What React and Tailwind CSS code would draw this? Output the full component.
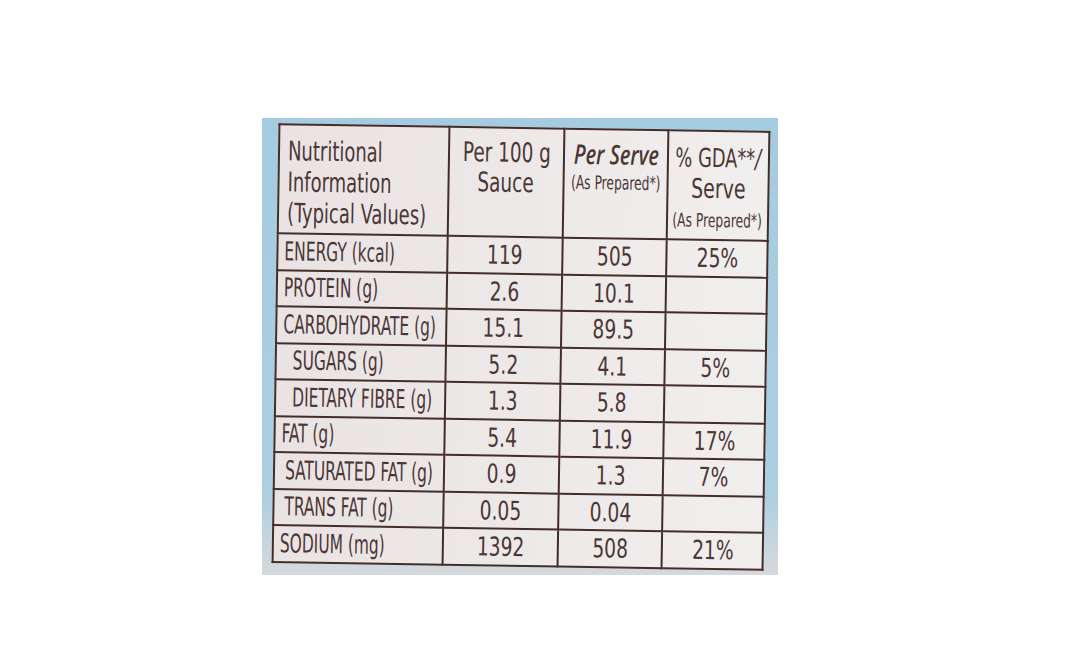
import React from "react";

const narrow = "font-['Liberation_Sans_Narrow','DejaVu_Sans_Condensed','Liberation_Sans',sans-serif]";

const rows = [
  { label: "ENERGY (kcal)", per100: "119", serve: "505", gda: "25%", indent: "pl-[6px]" },
  { label: "PROTEIN (g)", per100: "2.6", serve: "10.1", gda: "", indent: "pl-[6px]" },
  { label: "CARBOHYDRATE (g)", per100: "15.1", serve: "89.5", gda: "", indent: "pl-[6px]" },
  { label: "SUGARS (g)", per100: "5.2", serve: "4.1", gda: "5%", indent: "pl-[16px]" },
  { label: "DIETARY FIBRE (g)", per100: "1.3", serve: "5.8", gda: "", indent: "pl-[16px]" },
  { label: "FAT (g)", per100: "5.4", serve: "11.9", gda: "17%", indent: "pl-[6px]" },
  { label: "SATURATED FAT (g)", per100: "0.9", serve: "1.3", gda: "7%", indent: "pl-[10px]" },
  { label: "TRANS FAT (g)", per100: "0.05", serve: "0.04", gda: "", indent: "pl-[10px]" },
  { label: "SODIUM (mg)", per100: "1392", serve: "508", gda: "21%", indent: "pl-[6px]" },
];

const line = "border-[2px] border-[#432d29]";
const squeeze = "inline-block scale-x-[0.8] whitespace-nowrap";
const head = "flex justify-center";

const App = () => {
  return (
    <div className="min-h-[671px] w-[1068px] bg-white pl-[262px] pt-[118px]">
      <div className="h-[457px] w-[516px] overflow-hidden bg-[linear-gradient(to_bottom,#a4cbe0_0%,#accfe2_82%,#d6d9dd_100%)] pl-[13px] pt-[9px]">
        <table
          className={`${narrow} w-[490px] table-fixed rotate-[0.9deg] border-collapse bg-[linear-gradient(to_right,#e9e3e4,#efeaea_60%,#f1eeee)] text-[#4b3634]`}
        >
          <colgroup>
            <col className="w-[170px]" />
            <col className="w-[115px]" />
            <col className="w-[104px]" />
            <col className="w-[101px]" />
          </colgroup>
          <thead>
            <tr className="h-[109px] align-top">
              <th className={`${line} pl-[8px] pt-[10px] text-left font-normal`}>
                <div className="origin-left scale-x-[0.74] whitespace-nowrap text-[27px] leading-[31px]">
                  <div>Nutritional</div>
                  <div>Information</div>
                  <div>(Typical Values)</div>
                </div>
              </th>
              <th className={`${line} pt-[9px] font-normal`}>
                <div className={`${head} text-[27px] leading-[30px]`}>
                  <span className="inline-block scale-x-[0.76] whitespace-nowrap">Per 100 g</span>
                </div>
                <div className={`${head} text-[27px] leading-[30px]`}>
                  <span className="inline-block scale-x-[0.76] whitespace-nowrap">Sauce</span>
                </div>
              </th>
              <th className={`${line} pt-[9px] font-normal`}>
                <div className={`${head} font-['Open_Sans',sans-serif] text-[27px] font-semibold italic leading-[30px]`}>
                  <span className="inline-block scale-x-[0.74] whitespace-nowrap">Per Serve</span>
                </div>
                <div className={`${head} text-[19px] leading-[26px]`}>
                  <span className="inline-block scale-x-[0.72] whitespace-nowrap">
                    (As Prepared<span className="italic">*</span>)
                  </span>
                </div>
              </th>
              <th className={`${line} pt-[11px] font-normal`}>
                <div className={`${head} text-[26px] leading-[30px]`}>
                  <span className="inline-block scale-x-[0.76] whitespace-nowrap">
                    % GDA<span className="italic">**/</span>
                  </span>
                </div>
                <div className={`${head} text-[27px] leading-[32px]`}>
                  <span className="inline-block scale-x-[0.78] whitespace-nowrap">Serve</span>
                </div>
                <div className={`${head} text-[19px] leading-[30px]`}>
                  <span className="inline-block scale-x-[0.72] whitespace-nowrap">
                    (As Prepared<span className="italic">*</span>)
                  </span>
                </div>
              </th>
            </tr>
          </thead>
          <tbody>
            {rows.map((row) => (
              <tr key={row.label} className="h-[36.5px]">
                <td className={`${line} ${row.indent} text-left`}>
                  <span className="inline-block origin-left scale-x-[0.66] whitespace-nowrap text-[26px] leading-[30px]">
                    {row.label}
                  </span>
                </td>
                <td className={`${line} text-center text-[26px] leading-[30px]`}>
                  <span className={squeeze}>{row.per100}</span>
                </td>
                <td className={`${line} text-center text-[26px] leading-[30px]`}>
                  <span className={squeeze}>{row.serve}</span>
                </td>
                <td className={`${line} text-center text-[26px] leading-[30px]`}>
                  <span className={squeeze}>{row.gda}</span>
                </td>
              </tr>
            ))}
          </tbody>
        </table>
      </div>
    </div>
  );
};

export default App;
